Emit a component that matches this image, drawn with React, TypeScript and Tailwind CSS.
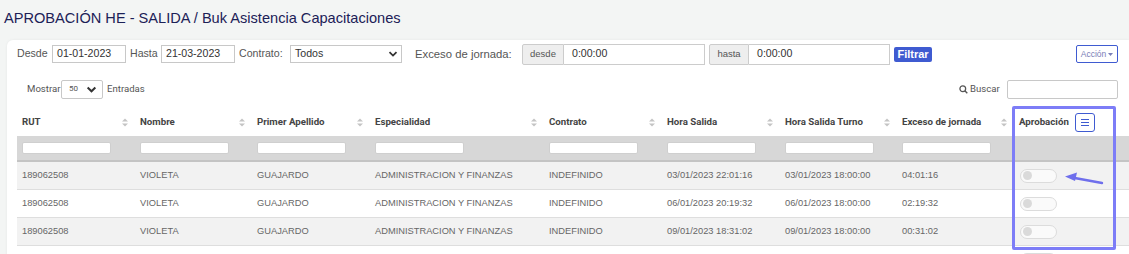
import React from "react";

const rows = [
  { rut: "189062508", nombre: "VIOLETA", apellido: "GUAJARDO", esp: "ADMINISTRACION Y FINANZAS", contrato: "INDEFINIDO", salida: "03/01/2023 22:01:16", turno: "03/01/2023 18:00:00", exceso: "04:01:16" },
  { rut: "189062508", nombre: "VIOLETA", apellido: "GUAJARDO", esp: "ADMINISTRACION Y FINANZAS", contrato: "INDEFINIDO", salida: "06/01/2023 20:19:32", turno: "06/01/2023 18:00:00", exceso: "02:19:32" },
  { rut: "189062508", nombre: "VIOLETA", apellido: "GUAJARDO", esp: "ADMINISTRACION Y FINANZAS", contrato: "INDEFINIDO", salida: "09/01/2023 18:31:02", turno: "09/01/2023 18:00:00", exceso: "00:31:02" },
];

const headers = ["RUT", "Nombre", "Primer Apellido", "Especialidad", "Contrato", "Hora Salida", "Hora Salida Turno", "Exceso de jornada"];

const gridCols = "grid grid-cols-[118px_117px_118px_174px_118px_118px_117px_117px_1fr]";

function SortIcon() {
  return (
    <svg width="6" height="9" viewBox="0 0 6 9" className="shrink-0">
      <polygon points="0,3.5 3,0.5 6,3.5" fill="#c4c4c4" />
      <polygon points="0,5.5 3,8.5 6,5.5" fill="#c4c4c4" />
    </svg>
  );
}

function Chevron({ size = 10 }: { size?: number }) {
  return (
    <svg width={size} height={size} viewBox="0 0 10 10">
      <path d="M1.5 3.2 L5 6.6 L8.5 3.2" fill="none" stroke="#333" strokeWidth="1.8" />
    </svg>
  );
}

function Toggle() {
  return (
    <div className="w-[37px] h-[14px] rounded-full border border-[#dcdcdc] bg-[#fafafa] flex items-center pl-[2px]">
      <div className="w-[9px] h-[9px] rounded-full bg-[#dadada]" />
    </div>
  );
}

export default function App() {
  return (
    <div className="relative min-h-screen bg-[#f3f5f4] overflow-hidden font-['Liberation_Sans',Arial,sans-serif]">
      {/* Title */}
      <div className="h-[40px] pl-[4px] pt-[8px] text-[14.6px] leading-[20px] text-[#1c2157]">
        APROBACIÓN HE - SALIDA / Buk Asistencia Capacitaciones
      </div>

      {/* Card */}
      <div className="ml-[7px] bg-white rounded-tl-[6px] shadow-[0_0_3px_rgba(0,0,0,0.06)] pl-[10px] pt-[4px] pb-[20px]">
        {/* Filters */}
        <div className="flex items-center h-[20px] pr-[11px] text-[10.6px] text-[#555]">
          <span className="w-[35px]">Desde</span>
          <div className="w-[74px] h-[18px] border border-[#c8c8c8] flex items-center pl-[4px] text-[#333]">01-01-2023</div>
          <span className="ml-[4px] w-[31px]">Hasta</span>
          <div className="w-[74px] h-[18px] border border-[#c8c8c8] flex items-center pl-[4px] text-[#333]">21-03-2023</div>
          <span className="ml-[4px] w-[51px]">Contrato:</span>
          <div className="w-[112px] h-[18px] border border-[#c8c8c8] flex items-center justify-between pl-[4px] pr-[3px] text-[#333]">
            <span>Todos</span>
            <Chevron />
          </div>
          <span className="ml-[13px] w-[107px] text-[11.3px]">Exceso de jornada:</span>
          <div className="w-[183px] h-[21px] flex">
            <div className="w-[42px] border border-[#ccc] bg-[#eee] rounded-l-[2px] flex items-center justify-center text-[9.5px] text-[#555]">desde</div>
            <div className="flex-1 border border-l-0 border-[#ccc] flex items-center pl-[8px] text-[#333]">0:00:00</div>
          </div>
          <div className="ml-[4px] w-[181px] h-[21px] flex">
            <div className="w-[40px] border border-[#ccc] bg-[#eee] rounded-l-[2px] flex items-center justify-center text-[9.5px] text-[#555]">hasta</div>
            <div className="flex-1 border border-l-0 border-[#ccc] flex items-center pl-[8px] text-[#333]">0:00:00</div>
          </div>
          <button className="ml-[4px] w-[38px] h-[15px] bg-[#3f5bd1] rounded-[2px] text-white font-bold text-[11px] leading-[15px]">Filtrar</button>
          <div className="flex-1" />
          <button className="w-[42px] h-[18px] border border-[#3f5bd1] rounded-[2px] text-[8.5px] text-[#7a80b8] flex items-center justify-center gap-[2px]">
            Acción
            <svg width="5" height="3" viewBox="0 0 5 3"><polygon points="0,0 5,0 2.5,3" fill="#7a80b8" /></svg>
          </button>
        </div>

        {/* Length + search */}
        <div className="flex items-center h-[20px] mt-[15px] pr-[11px] font-['Roboto',sans-serif] text-[9.6px] text-[#555]">
          <span className="ml-[10px] w-[34px]">Mostrar</span>
          <div className="w-[42px] h-[19px] border border-[#c8c8c8] rounded-[2px] flex items-center justify-between pl-[7px] pr-[5px] text-[8px] text-[#555]">
            <span>50</span>
            <Chevron size={11} />
          </div>
          <span className="ml-[4px]">Entradas</span>
          <div className="flex-1" />
          <svg width="9" height="9" viewBox="0 0 10 10" className="mr-[2px]">
            <circle cx="4.2" cy="4.2" r="3.2" fill="none" stroke="#555" strokeWidth="1.4" />
            <path d="M6.5 6.5 L9.2 9.2" stroke="#555" strokeWidth="1.6" />
          </svg>
          <span className="w-[37px]">Buscar</span>
          <div className="w-[111px] h-[19px] border border-[#c8c8c8] rounded-[2px]" />
        </div>

        {/* Table */}
        <div className="mt-[9px]">
          <div className={`${gridCols} h-[28px] font-['Roboto',sans-serif] font-bold text-[9.7px] text-[#444]`}>
            {headers.map((h) => (
              <div key={h} className="flex items-center justify-between pl-[5px] pr-[7px]">
                <span>{h}</span>
                <SortIcon />
              </div>
            ))}
            <div className="flex items-center pl-[5px]">
              <span>Aprobación</span>
              <div className="ml-[6px] w-[20px] h-[19px] border border-[#3f5bd1] rounded-[3px] flex flex-col items-center justify-center gap-[2px]">
                <div className="w-[8px] h-[1px] bg-[#3f5bd1]" />
                <div className="w-[8px] h-[1px] bg-[#3f5bd1]" />
                <div className="w-[8px] h-[1px] bg-[#3f5bd1]" />
              </div>
            </div>
          </div>

          <div className={`${gridCols} h-[26px] bg-[#d7d7d7] border-b-2 border-[#c4c4c4]`}>
            {headers.map((h) => (
              <div key={h} className="flex items-center pl-[5px]">
                <div className="w-[89px] h-[12px] bg-white border border-[#cfcfcf] rounded-[2px]" />
              </div>
            ))}
            <div />
          </div>

          {rows.map((r, i) => (
            <div
              key={i}
              className={`${gridCols} h-[28px] border-b border-[#dedede] text-[9.3px] text-[#666] ${i % 2 === 0 ? "bg-[#f2f2f2]" : "bg-white"}`}
            >
              {[r.rut, r.nombre, r.apellido, r.esp, r.contrato, r.salida, r.turno, r.exceso].map((v, j) => (
                <div key={j} className="flex items-center pl-[5px] whitespace-nowrap">{v}</div>
              ))}
              <div className="flex items-center pl-[6px]">
                <Toggle />
              </div>
            </div>
          ))}

          {/* next row, only its switch peeks into view */}
          <div className={`${gridCols} h-[28px] bg-white`}>
            <div className="col-start-9 flex items-center pl-[6px]">
              <Toggle />
            </div>
          </div>
        </div>
      </div>

      {/* Annotation overlay */}
      <div className="absolute left-[1012px] top-[106px] w-[104px] h-[144px] border-[3px] border-[#7d7df7] rounded-[2px]" />
      <svg className="absolute left-[1060px] top-[168px]" width="50" height="20" viewBox="0 0 50 20">
        <path d="M42 15 L12 9.5" stroke="#6f6fec" strokeWidth="2.4" strokeLinecap="round" />
        <polygon points="5,8.5 17,4.5 15,13" fill="#6f6fec" />
      </svg>
    </div>
  );
}
